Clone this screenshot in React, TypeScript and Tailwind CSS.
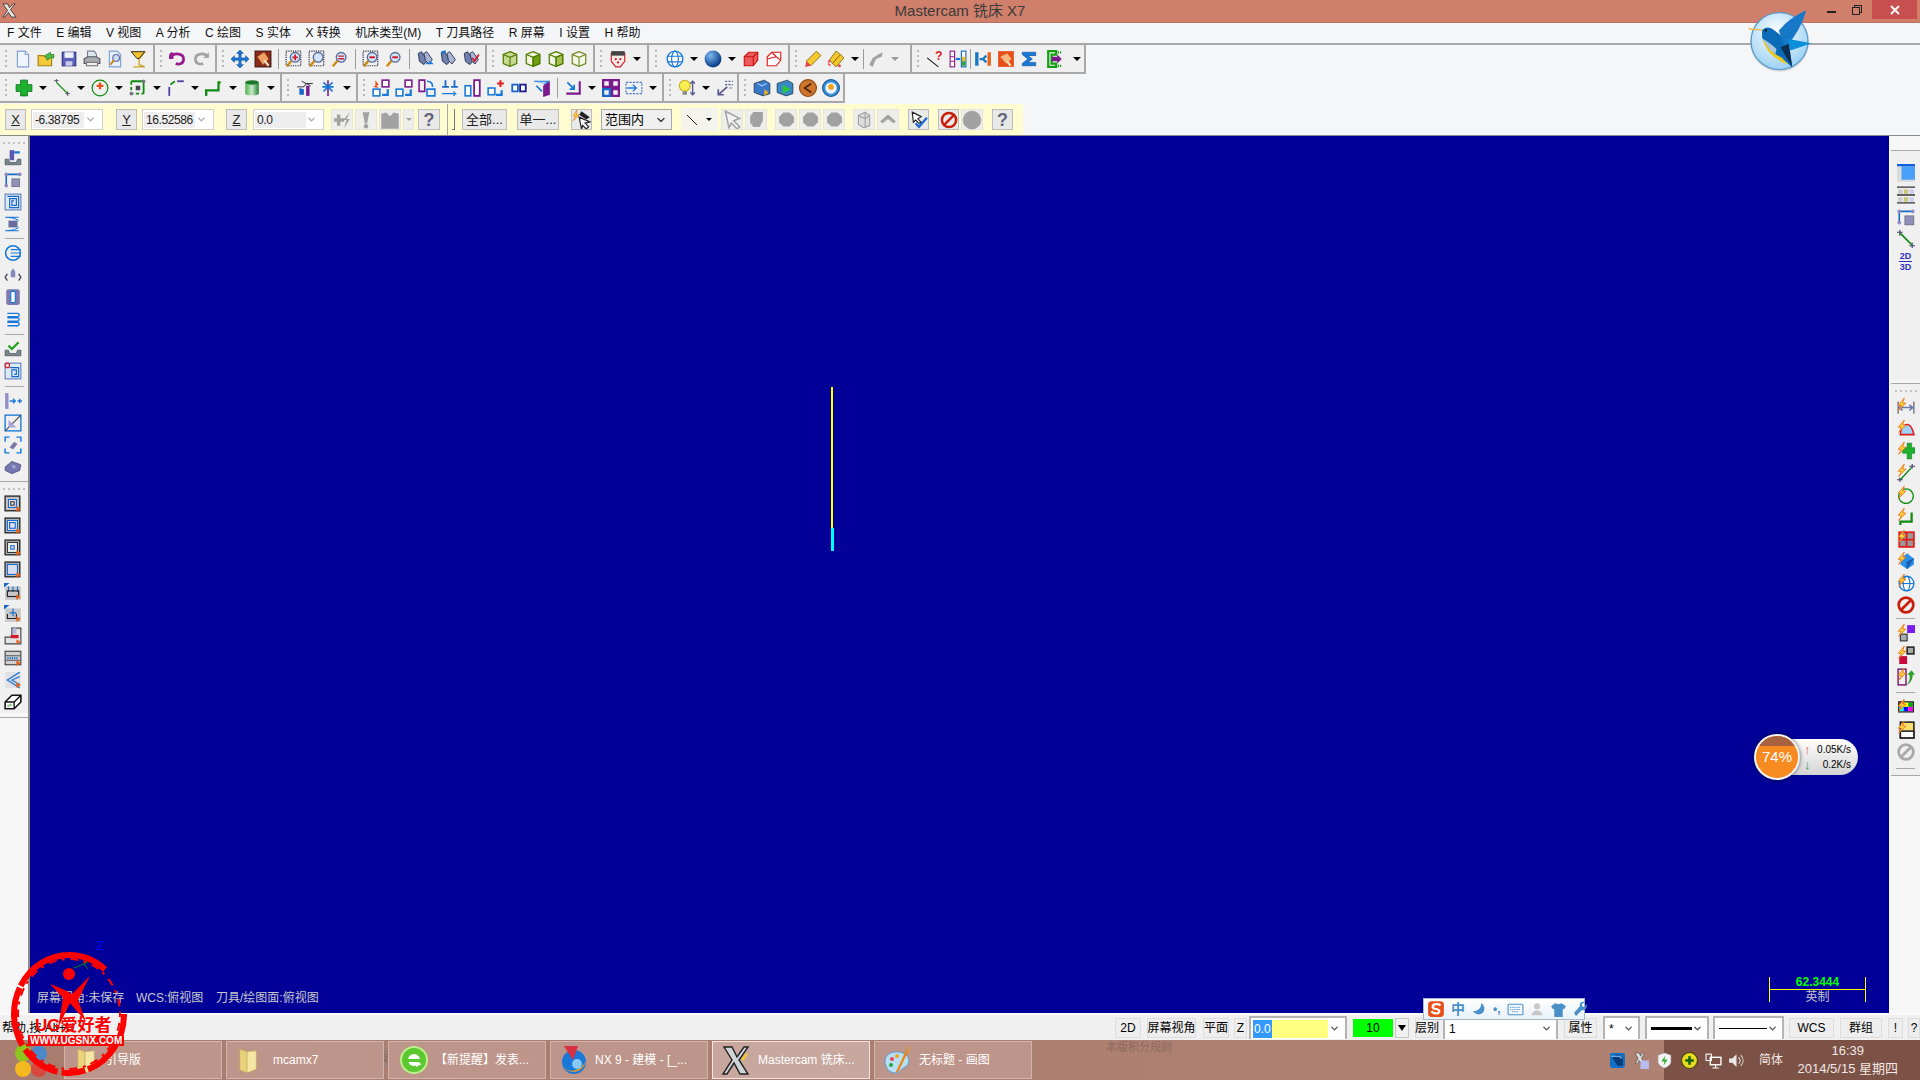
import type { ReactNode } from "react";
import { ChevronDown } from "lucide-react";

const S = ({ children, size = 18 }: { children: ReactNode; size?: number }) => (
  <svg viewBox="0 0 16 16" width={size} height={size} className="block shrink-0">
    {children}
  </svg>
);

// shared little drawings
const Mag = ({ dots, sign, glass = "#cfe6fb" }: { dots?: boolean; sign?: string; glass?: string }) => (
  <S>
    {dots && <rect x="1" y="1" width="13" height="13" fill="none" stroke="#223" strokeWidth="1" strokeDasharray="1 1" />}
    <circle cx="9" cy="6.5" r="4.3" fill={glass} stroke="#5a6a9a" strokeWidth="1.2" />
    <path d="M5.8 9.6L1.6 14.4" stroke="#c98a10" strokeWidth="2.2" />
    {sign === "+" && <path d="M9 4v5M6.5 6.5h5" stroke="#d21c2c" strokeWidth="1.6" />}
    {sign === "-" && <path d="M6.5 6.5h5" stroke="#d21c2c" strokeWidth="1.8" />}
    {sign === "=" && <path d="M6.5 5.4h5M6.5 7.8h5" stroke="#d21c2c" strokeWidth="1.2" />}
  </S>
);

const Cube = ({ stroke, fill, top, side }: { stroke: string; fill: string; top?: string; side?: string }) => (
  <S>
    <path d="M8 1.5L14 4v8l-6 2.5L2 12V4z" fill={fill} stroke={stroke} strokeWidth="1.1" />
    {top && <path d="M8 1.5L14 4 8 6.5 2 4z" fill={top} stroke={stroke} strokeWidth="1" />}
    {side && <path d="M8 6.5L14 4v8l-6 2.5z" fill={side} stroke={stroke} strokeWidth="1" />}
    <path d="M2 4l6 2.5L14 4M8 6.5v8" fill="none" stroke={stroke} strokeWidth="1" />
  </S>
);

const Bino = ({ mark }: { mark: ReactNode }) => (
  <S>
    <path d="M2 3l3-1.5 5 8-3 3.5-4-3z" fill="#6f7fae" stroke="#2b3150" strokeWidth=".8" />
    <path d="M7 3l2.5-1.5 5 7-3 4-3-3z" fill="#a9b5d2" stroke="#2b3150" strokeWidth=".8" />
    {mark}
  </S>
);

const Bolt = () => (
  <path d="M6.5 0L1 6.5h3L1.5 11 8 4.5H5z" fill="#ffd53c" stroke="#e8701a" strokeWidth=".7" />
);

const PrintBox = ({ inner }: { inner: ReactNode }) => (
  <S>
    <rect x="1" y="1" width="13" height="13" fill="#c4c4c4" stroke="#333" strokeWidth="1.3" />
    {inner}
    <path d="M11 10l4 2.5-4 2.5z" fill="#e8641a" />
  </S>
);

const Grip = ({ className = "w-[11px]" }: { className?: string }) => (
  <div className={`flex shrink-0 flex-col items-center justify-center gap-[3px] ${className}`}>
    {[0, 1, 2, 3].map((i) => (
      <div key={i} className="h-[2px] w-[2px] bg-[#b8b8b8]" />
    ))}
  </div>
);

const T = ({ children }: { children: ReactNode }) => (
  <div className="flex h-full w-[23px] shrink-0 items-center justify-center">{children}</div>
);

const Arr = ({ muted }: { muted?: boolean }) => (
  <div className="flex h-full w-[15px] shrink-0 items-center justify-center">
    <div className={`h-0 w-0 border-x-[4px] border-t-[4px] border-x-transparent ${muted ? "border-t-[#9a9a9a]" : "border-t-black"}`} />
  </div>
);

const Thin = ({ className = "w-[8px]" }: { className?: string }) => (
  <div className={`flex h-full shrink-0 items-center justify-center ${className}`}>
    <div className="h-[20px] w-px bg-[#9c9c9c]" />
  </div>
);

const Bar = ({ className, children }: { className: string; children: ReactNode }) => (
  <div className={`flex h-[29px] shrink-0 items-center border-r-2 border-b-2 border-r-[#a8a8a8] border-b-[#a8a8a8] bg-[#f0f0f0] ${className}`}>
    {children}
  </div>
);

const Btn = ({ className, children }: { className: string; children?: ReactNode }) => (
  <div className={`flex h-[21px] shrink-0 items-center justify-center border border-[#bdbdbd] bg-[#e9e9e9] text-[13px] text-[#222] ${className}`}>
    {children}
  </div>
);

const GreyBtn = ({ className, children }: { className: string; children?: ReactNode }) => (
  <div className={`flex h-[21px] shrink-0 items-center justify-center border border-[#e4e4e0] bg-[#eeeeea] ${className}`}>
    {children}
  </div>
);

const Hex = () => (
  <S size={17}>
    <path d="M5 1.5h6L15 5.5v5L11 14.5H5L1 10.5v-5z" fill="#a2a2a2" />
  </S>
);

const Combo = ({ className, value }: { className: string; value: string }) => (
  <div className={`flex h-[21px] shrink-0 items-center border border-[#d0d0d0] bg-white pl-[1px] ${className}`}>
    <span className="w-[51px] bg-[#eeeeee] px-[2px] text-[12px] leading-[16px] tracking-[-0.4px] text-[#222]">{value}</span>
    <ChevronDown size={11} strokeWidth={3} className="ml-auto mr-[6px] text-[#aaa]" />
  </div>
);

const StatusBtn = ({ className, children }: { className: string; children: ReactNode }) => (
  <div className={`flex h-[20px] shrink-0 items-center justify-center whitespace-nowrap border border-[#dcdcdc] bg-[#eeeeee] text-[12px] ${className}`}>
    {children}
  </div>
);

const StatusCombo = ({ className, children }: { className: string; children: ReactNode }) => (
  <div className={`flex h-[23px] shrink-0 items-center border-x-2 border-t-2 border-[#b4b4b4] bg-white px-[4px] text-[12px] ${className}`}>
    {children}
    <ChevronDown size={11} strokeWidth={3} className="ml-auto text-[#555]" />
  </div>
);

const Cell = ({ children }: { children: ReactNode }) => (
  <div className="flex h-[22px] items-center justify-center">{children}</div>
);

const Rule = ({ className = "" }: { className?: string }) => (
  <div className={`mx-auto h-px w-[19px] bg-[#a8a8a8] ${className}`} />
);

const HGrip = () => (
  <div className="flex h-[5px] items-center justify-center gap-[3px]">
    {[0, 1, 2, 3, 4].map((i) => (
      <div key={i} className="h-[2px] w-[2px] bg-[#c0c0c0]" />
    ))}
  </div>
);

const Folder = () => (
  <svg viewBox="0 0 24 30" width="22" height="30" className="shrink-0">
    <path d="M3 3l8 3v23l-8-3z" fill="#e8d27c" stroke="#b9a050" strokeWidth=".6" />
    <path d="M11 6l10-1v20l-10 4z" fill="#f5e6a4" stroke="#c4ad62" strokeWidth=".6" />
  </svg>
);

const TaskBtn = ({ icon, label, active, className = "" }: { icon: ReactNode; label: string; active?: boolean; className?: string }) => (
  <div
    className={`flex h-[38px] w-[158px] shrink-0 items-center border text-[12px] text-white ${
      active ? "border-[#f2e6e2] bg-[#c7a79e]" : "border-[#d2b5ac] bg-[#bd958a]"
    } ${className}`}
  >
    {icon}
    <span className="whitespace-nowrap">{label}</span>
  </div>
);

const Bird = () => (
  <svg viewBox="320 20 200 200" className="absolute left-[1747px] top-[7px] h-[67px] w-[67px]">
    <defs>
      <radialGradient id="orb" cx="45%" cy="35%" r="70%">
        <stop offset="0" stopColor="#ffffff" />
        <stop offset="1" stopColor="#94cdf3" />
      </radialGradient>
    </defs>
    <circle cx="417" cy="125" r="88" fill="#999" opacity=".3" />
    <circle cx="417" cy="122" r="85" fill="url(#orb)" stroke="#5e9cc9" strokeWidth="4" />
    <path d="M325 85L368 89" stroke="#e8b84a" strokeWidth="4" />
    <path d="M365 90Q375 76 395 85L415 100 445 130 455 200 420 170Q375 150 365 110z" fill="#0b6bb8" />
    <path d="M368 115Q385 125 408 145L405 160Q375 150 368 115z" fill="#aac6dc" />
    <path d="M367 115Q375 165 442 192L425 172Q390 160 370 120z" fill="#f0c814" />
    <path d="M430 135L415 90Q450 50 497 30 480 90 440 135z" fill="#1878c8" />
    <path d="M440 115L512 128 450 150z" fill="#0a8fd8" />
    <path d="M420 140L445 130 455 200z" fill="#0b2e55" />
    <circle cx="376" cy="90" r="4" fill="#0a2440" />
  </svg>
);

const Watermark = () => (
  <div className="absolute left-[8px] top-[948px] h-[132px] w-[124px]">
    <svg viewBox="0 0 124 132" className="absolute inset-0 h-full w-full">
      <ellipse cx="61" cy="66" rx="55" ry="59" fill="none" stroke="#f00" strokeWidth="6" strokeDasharray="70 3 24 4 40 5 60 2 100" />
      <ellipse cx="61" cy="66" rx="51" ry="55" fill="none" stroke="#f00" strokeWidth="2" strokeDasharray="3 6 8 5" />
      <circle cx="61" cy="26" r="6" fill="#f00" />
      <path d="M42 36Q58 42 64 46L82 28 70 52 78 74 62 55 50 80 55 50z" fill="#f00" />
      <path d="M66 20l14-6M76 16l4 5" stroke="#080" strokeWidth="1" />
    </svg>
    <div className="absolute left-[27px] top-[68px] whitespace-nowrap text-[17px] font-bold leading-[20px] text-[#f00]">
      UG爱好者
    </div>
    <div className="absolute left-[20px] top-[87px] whitespace-nowrap bg-[#f00] px-[2px] text-[10px] font-bold leading-[11px] text-white">
      WWW.UGSNX.COM
    </div>
  </div>
);

const Meter = () => (
  <div className="absolute left-[1754px] top-[734px] flex h-[46px] w-[106px] items-center">
    <div className="ml-[22px] flex h-[36px] w-[82px] flex-col justify-center rounded-r-full bg-gradient-to-b from-white to-[#d4d4d4] pl-[28px] text-[10px] leading-[15px] text-black">
      <div className="flex items-center">
        <span className="text-[13px] font-bold leading-none text-[#d9604a]">↑</span>
        <span className="ml-auto mr-[7px]">0.05K/s</span>
      </div>
      <div className="flex items-center">
        <span className="text-[13px] font-bold leading-none text-[#2f9a52]">↓</span>
        <span className="ml-auto mr-[7px]">0.2K/s</span>
      </div>
    </div>
    <div className="absolute left-0 top-0 flex h-[46px] w-[46px] items-center justify-center overflow-hidden rounded-full border-2 border-[#f4f4f4] bg-[#f88a22] text-[15px] text-white shadow-[0_0_4px_rgba(0,0,0,.6)]">
      <div className="absolute left-0 right-0 top-0 h-[10px] bg-[#a9623f]" />
      <span className="relative">74%</span>
    </div>
  </div>
);

const Toolbar1 = () => (
  <div className="flex h-[31px] items-start border-t-2 border-t-[#a8a8a8]">
    <Bar className="w-[155px]">
      <Grip />
      <T><S><path d="M3 1h7l3 3v11H3z" fill="#eef5ff" stroke="#7f9fd0" /><path d="M10 1v3h3" fill="#fff" stroke="#7f9fd0" /></S></T>
      <T><S><path d="M1 5h5l1 1h6v8H1z" fill="#f5c93a" stroke="#a07f10" /><path d="M7 5l5-3v2h3v3h-3l-3 2z" fill="#4cb848" stroke="#1f7a1f" strokeWidth=".6" /></S></T>
      <T><S><rect x="2" y="2" width="12" height="12" fill="#5b62b8" stroke="#2c2f80" /><rect x="4" y="2" width="8" height="5" fill="#f0f0ff" /><rect x="5" y="10" width="6" height="4" fill="#c9cbe8" /></S></T>
      <T><S><path d="M4 1h6l2 3v3H4z" fill="#dfe6f0" stroke="#77808f" /><path d="M1 8l3-2h8l3 2v4H1z" fill="#a9acb2" stroke="#55585e" /><rect x="3" y="11" width="10" height="3" fill="#eee" stroke="#777" /></S></T>
      <T><S><path d="M3 1h7l3 3v11H3z" fill="#e6f0ff" stroke="#7f9fd0" /><circle cx="9" cy="7" r="3" fill="#cde" stroke="#5a6a9a" /><path d="M7 9l-3 4" stroke="#c98a10" strokeWidth="1.6" /></S></T>
      <T><S><path d="M2 2h12L9 8v5l5 2H4" fill="none" stroke="#caa020" strokeWidth="1.2" /><path d="M2 1.5h12l-5 6H7z" fill="#f2c22c" stroke="#222" strokeWidth=".8" /></S></T>
    </Bar>
    <Bar className="w-[62px]">
      <Grip />
      <T><S><path d="M4 4C2 2 1 4 1 5v2h3" fill="none" stroke="#9a1a8c" strokeWidth="2" /><path d="M2 6c3-4 11-3 11 2s-5 5-7 4" fill="none" stroke="#9a1a8c" strokeWidth="2.4" /></S></T>
      <T><S><path d="M14 6c-3-4-11-3-11 2s5 5 7 4" fill="none" stroke="#a2a2a2" strokeWidth="2.4" /><path d="M15 2v5h-5z" fill="#a2a2a2" /></S></T>
    </Bar>
    <Bar className="w-[270px]">
      <Grip />
      <T><S><path d="M8 0l3 3H9v4h4V5l3 3-3 3V9H9v4h2l-3 3-3-3h2V9H3v2L0 8l3-3v2h4V3H5z" fill="#1878d8" stroke="#0a4a90" strokeWidth=".5" /></S></T>
      <T><S><rect x="1" y="1" width="14" height="14" fill="#8c2a1a" stroke="#40120a" /><path d="M3 6l6-4 4 6-5 5z" fill="#f0a060" /><path d="M9 9l4 5" stroke="#e8e0c8" strokeWidth="2" /></S></T>
      <Thin />
      <T><Mag dots sign="+" /></T>
      <T><Mag dots /></T>
      <T><Mag sign="=" /></T>
      <Thin />
      <T><Mag dots sign="-" /></T>
      <T><Mag sign="-" /></T>
      <Thin />
      <T><Bino mark={<path d="M9 12l5 0-2-2" stroke="#1878d8" fill="none" strokeWidth="1.5" />} /></T>
      <T><Bino mark={<path d="M2 2l4-1M2 2l2 2" stroke="#1878d8" fill="none" strokeWidth="1.5" />} /></T>
      <T><Bino mark={<path d="M9 7l2 3 4-6" stroke="#d21c2c" fill="none" strokeWidth="1.6" />} /></T>
    </Bar>
    <Bar className="w-[108px]">
      <Grip />
      <T><Cube stroke="#4e7a00" fill="#c8d890" /></T>
      <T><Cube stroke="#4e7a00" fill="#f0f4e0" side="#6ea010" /></T>
      <T><Cube stroke="#4e7a00" fill="#f0f4e0" side="#a4c050" /></T>
      <T><Cube stroke="#6e8a20" fill="#f4f6ea" /></T>
    </Bar>
    <Bar className="w-[54px]">
      <Grip />
      <T><S><path d="M2 3h12v7l-4 5H6l-4-5z" fill="#fde8e8" stroke="#d01c1c" /><rect x="2" y="1" width="12" height="4" fill="#444" /><circle cx="6" cy="8" r="1" fill="#d01c1c" /><circle cx="10" cy="8" r="1" fill="#d01c1c" /><circle cx="8" cy="11" r="1" fill="#d01c1c" /></S></T>
      <Arr />
    </Bar>
    <Bar className="w-[141px]">
      <Grip className="w-[14px]" />
      <T><S><circle cx="8" cy="8" r="7" fill="#fff" stroke="#1878d8" strokeWidth="1.2" /><ellipse cx="8" cy="8" rx="3" ry="7" fill="none" stroke="#1878d8" /><path d="M1 5.5h14M1 10.5h14" stroke="#1878d8" /></S></T>
      <Arr />
      <T><S><defs><radialGradient id="sph" cx="35%" cy="30%" r="70%"><stop offset="0" stopColor="#7ab8f0" /><stop offset="1" stopColor="#0a3a88" /></radialGradient></defs><circle cx="8" cy="8" r="7.5" fill="url(#sph)" /></S></T>
      <Arr />
      <T><S><path d="M2 6l4-4h8v7l-4 5H2z" fill="#ef5a5a" stroke="#c81414" /><path d="M2 6h8v8M10 6l4-4" fill="none" stroke="#c81414" /></S></T>
      <T><S><path d="M2 6l4-4h8v7l-4 5H2z" fill="#fff" stroke="#e01c1c" /><path d="M6 2l4 4 4 3M10 6l-8 2" fill="none" stroke="#e01c1c" /></S></T>
    </Bar>
    <Bar className="w-[122px]">
      <Grip />
      <T><S><path d="M11 1l4 4-9 9-4-4z" fill="#f2c92c" stroke="#8c6a10" strokeWidth=".8" /><path d="M2 10l4 4-5 1z" fill="#e8464c" /></S></T>
      <T><S><path d="M8 1l4 3-7 8-3-3z" fill="#f2c92c" stroke="#8c6a10" strokeWidth=".8" /><path d="M12 4l3 3-7 8-3-3z" fill="#f2c92c" stroke="#8c6a10" strokeWidth=".8" /><path d="M1 12l2 2M3 9l-2 2" stroke="#e8464c" strokeWidth="1.5" /><circle cx="11" cy="14" r="1.4" fill="#e8464c" /></S></T>
      <Arr />
      <Thin className="w-[2px]" />
      <T><S><path d="M14 2l-1 4-5 2-3 7-3-2 3-6 5-3z" fill="#a2a2a2" /></S></T>
      <Arr muted />
    </Bar>
    <Bar className="w-[174px]">
      <Grip />
      <T><S><path d="M1 7l10 8" stroke="#222" strokeWidth="1" /><text x="8" y="9" fontSize="11" fontWeight="700" fill="#e02020" fontFamily="Liberation Sans">?</text></S></T>
      <T><S><rect x="1" y="1" width="4" height="14" fill="#fff" stroke="#8c1a8c" /><path d="M1 6h4M1 10h4" stroke="#8c1a8c" /><rect x="11" y="1" width="4" height="14" fill="#fff" stroke="#1868c8" /><rect x="11.5" y="6" width="3" height="4" fill="#e8c020" /><rect x="11.5" y="10" width="3" height="4" fill="#30a030" /><path d="M6 8h4" stroke="#1878d8" strokeWidth="2" /></S></T>
      <Thin className="w-[2px]" />
      <T><S><rect x="1" y="2" width="3" height="12" fill="#1878c8" /><rect x="12" y="2" width="3" height="12" fill="#e8641a" /><path d="M5 8h3M11 5l-3 3 3 3" stroke="#1878c8" strokeWidth="2" fill="none" /></S></T>
      <T><S><rect x="1" y="1" width="14" height="14" fill="#e8501a" /><path d="M3 6l6-3 4 5-5 4z" fill="#f5b880" /><path d="M9 10l3 4" stroke="#f0e0b0" strokeWidth="2" /></S></T>
      <T><S><path d="M2 2h12v3H7l4 3-4 3h7v3H2v-2l5-4-5-4z" fill="#1878d8" stroke="#0a4a90" strokeWidth=".5" /></S></T>
      <div className="flex h-full w-[29px] shrink-0 items-center justify-center"><S><path d="M2 1h7v3H5v8h4v3H2z" fill="none" stroke="#10a010" strokeWidth="2" /><path d="M11 1v2M13 1v2M11 13v2M13 13v2" stroke="#10a010" /><path d="M5 6h5V4l4 4-4 4v-2H5z" fill="#7a1a8c" /></S></div>
      <Arr />
    </Bar>
  </div>
);

const Toolbar2 = () => (
  <div className="flex h-[30px] items-start">
    <Bar className="w-[282px]">
      <Grip className="w-[12px]" />
      <T><S><path d="M5 1h6v4h4v6h-4v4H5v-4H1V5h4z" fill="#20b030" stroke="#0a7a1a" strokeWidth=".8" /></S></T>
      <Arr />
      <T><S><path d="M3 3l10 10" stroke="#108a10" strokeWidth="1.2" /><path d="M1 1.5h4M3 0v3M11 13h4M13 11v4" stroke="#446" strokeWidth=".8" /></S></T>
      <Arr />
      <T><S><circle cx="8" cy="8" r="7" fill="none" stroke="#108a10" strokeWidth="1.1" /><path d="M8 3v6M5 6h6" stroke="#e8501a" strokeWidth="2" /></S></T>
      <Arr />
      <T><S><path d="M2 2h11v11" fill="none" stroke="#108a10" strokeWidth="1.6" /><path d="M2 2v11h11" fill="none" stroke="#108a10" strokeWidth="1.6" strokeDasharray="3 2" /><rect x="6" y="6" width="4" height="4" fill="#445" /><circle cx="2" cy="13" r="1.6" fill="#778" /><circle cx="13" cy="2" r="1.6" fill="#778" /></S></T>
      <Arr />
      <T><S><path d="M2 15V7" stroke="#5040a0" strokeWidth="1.6" /><path d="M3 5l4-3" stroke="#108a10" strokeWidth="1.6" /><path d="M9 2h6" stroke="#5040a0" strokeWidth="1.6" /></S></T>
      <Arr />
      <T><S><path d="M1 14v-4h11V3h2" fill="none" stroke="#108a10" strokeWidth="2" /><path d="M1 12v3" stroke="#108a10" strokeWidth="2" /></S></T>
      <Arr />
      <T><S><defs><linearGradient id="cyl" x1="0" x2="1"><stop offset="0" stopColor="#50b050" /><stop offset=".5" stopColor="#c8e8c8" /><stop offset="1" stopColor="#208030" /></linearGradient></defs><path d="M2 3v10c0 2 12 2 12 0V3z" fill="url(#cyl)" /><ellipse cx="8" cy="3" rx="6" ry="2" fill="#1a7a2a" /></S></T>
      <Arr />
    </Bar>
    <Bar className="w-[76px]">
      <Grip />
      <T><S><path d="M1 7h6l2-3h6M5 2l8 4" fill="none" stroke="#223" strokeWidth=".8" /><path d="M3 8l4 1v5H3z" fill="#1868c8" /><path d="M9 6h3v9H9z" fill="#7a1a8c" /></S></T>
      <T><S><path d="M8 1v14" stroke="#7a1a8c" strokeWidth="1.4" /><path d="M4 3l8 8M12 3l-8 8M3 7h10" stroke="#1878d8" strokeWidth="1.4" /></S></T>
      <Arr />
    </Bar>
    <Bar className="w-[306px]">
      <Grip />
      <T><S><rect x="9" y="1" width="6" height="6" fill="#fff" stroke="#7a1a8c" strokeWidth="1.4" /><rect x="1" y="9" width="6" height="6" fill="#fff" stroke="#1878d8" strokeWidth="1.4" /><path d="M3 1l3 4-2 1 2 2-5-1 2-1z" fill="#e8501a" /><path d="M9 14h5v-5" stroke="#1878d8" strokeWidth="2" fill="none" /></S></T>
      <T><S><rect x="9" y="1" width="6" height="6" fill="#fff" stroke="#7a1a8c" strokeWidth="1.4" /><rect x="1" y="9" width="6" height="6" fill="#fff" stroke="#1878d8" strokeWidth="1.4" /><path d="M9 14h5v-5" stroke="#1878d8" strokeWidth="2" fill="none" /></S></T>
      <T><S><path d="M1 1h5v10H1z" fill="none" stroke="#7a1a8c" strokeWidth="1.4" /><path d="M8 15h7V9H8z" fill="none" stroke="#1878d8" strokeWidth="1.4" /><path d="M8 2c4 0 5 2 5 5" stroke="#1878d8" fill="none" strokeWidth="1.4" /></S></T>
      <T><S><path d="M4 1v6H1M4 7h3M12 1v6h3M12 7H9" fill="none" stroke="#1868c8" strokeWidth="1.6" /><path d="M1 13h12l-2-2M13 13l-2 2" fill="none" stroke="#1878d8" /></S></T>
      <T><S><rect x="1" y="6" width="5" height="9" fill="#fff" stroke="#1878d8" strokeWidth="1.4" /><rect x="9" y="1" width="5" height="14" fill="#fff" stroke="#7a1a8c" strokeWidth="1.6" /></S></T>
      <T><S><rect x="1" y="8" width="6" height="6" fill="#fff" stroke="#1878d8" strokeWidth="1.4" /><path d="M12 1v6M9 4h6" stroke="#e01c1c" strokeWidth="1.8" /><path d="M8 14h5v-4" stroke="#1878d8" strokeWidth="2" fill="none" /></S></T>
      <T><S><rect x="2" y="5" width="5" height="6" fill="#fff" stroke="#1868c8" strokeWidth="1.6" /><rect x="9" y="5" width="5" height="6" fill="#fff" stroke="#1a1a8c" strokeWidth="1.6" /></S></T>
      <T><S><path d="M1 2h13l-4 3" fill="#a8d0f0" stroke="#1878d8" /><path d="M9 6l6-4v12l-6 2z" fill="#7a1a8c" /><path d="M3 6l5 5" stroke="#1878d8" strokeWidth="1.5" /></S></T>
      <Thin />
      <T><S><path d="M2 13h12V2" fill="none" stroke="#7a1a8c" strokeWidth="1.8" /><path d="M3 3l6 6M9 5v4H5" fill="none" stroke="#1878d8" strokeWidth="1.6" /></S></T>
      <Arr />
      <T><S><rect x="1" y="1" width="6" height="6" fill="none" stroke="#7a1a8c" strokeWidth="2" /><rect x="9" y="1" width="6" height="6" fill="none" stroke="#7a1a8c" strokeWidth="2" /><rect x="1" y="9" width="6" height="6" fill="none" stroke="#1868c8" strokeWidth="2" /><rect x="9" y="9" width="6" height="6" fill="none" stroke="#7a1a8c" strokeWidth="2" /></S></T>
      <T><S><rect x="1" y="3" width="14" height="10" fill="none" stroke="#4878c8" strokeDasharray="2 1" /><path d="M2 8h8M7 5l3 3-3 3" fill="none" stroke="#1878d8" strokeWidth="1.2" /></S></T>
      <Arr />
    </Bar>
    <Bar className="w-[75px]">
      <Grip />
      <T><S><circle cx="6" cy="6" r="4.8" fill="#f8ee50" stroke="#c8b020" /><rect x="4" y="11" width="4" height="3" fill="#888" /><path d="M13 2v12M11 4l2-2 2 2M11 12l2 2 2-2" fill="none" stroke="#5a5a90" strokeWidth="1.3" /></S></T>
      <Arr />
      <T><S><path d="M8 2h7M8 5h7M12 8h3" stroke="#5a5a90" strokeDasharray="2 1" /><path d="M10 7l-8 7M2 9v5h5" fill="none" stroke="#5a5a90" strokeWidth="1.5" /></S></T>
    </Bar>
    <Bar className="w-[106px]">
      <Grip />
      <T><S><path d="M1 4l9-3 5 3v9l-6 2-8-3z" fill="#3a78c8" stroke="#123" strokeWidth=".6" /><path d="M4 4l4 2 4-2" stroke="#9cf" fill="none" /><path d="M10 9l4 3-4 3z" fill="#f2b020" /></S></T>
      <T><S><path d="M1 4l9-3 5 3v9l-6 2-8-3z" fill="#3a88c8" stroke="#123" strokeWidth=".6" /><path d="M6 5l7 4-7 4z" fill="#28c838" /></S></T>
      <T><S><circle cx="8" cy="8" r="7.5" fill="#d0762a" stroke="#8a4a10" /><path d="M11 4L5 8l6 4" fill="none" stroke="#4a2a10" strokeWidth="1.6" /></S></T>
      <T><S><circle cx="8" cy="8" r="7.5" fill="#3a90d8" stroke="#1a5a98" /><circle cx="8" cy="8" r="5" fill="#eef6ff" /><circle cx="8" cy="7" r="2.6" fill="#f2a020" /></S></T>
    </Bar>
  </div>
);

const Toolbar3 = () => (
  <div className="flex h-[31px] w-[1023px] items-center border-b-0 bg-[#fffdd0] pl-[5px]">
    <Btn className="w-[21px]"><span className="underline">X</span></Btn>
    <Combo className="ml-[5px] w-[72px]" value="-6.38795" />
    <Btn className="ml-[13px] w-[21px]"><span className="underline">Y</span></Btn>
    <Combo className="ml-[5px] w-[72px]" value="16.52586" />
    <Btn className="ml-[12px] w-[21px]"><span className="underline">Z</span></Btn>
    <Combo className="ml-[6px] w-[71px]" value="0.0" />
    <GreyBtn className="ml-[7px] w-[22px]"><S size={18}><path d="M5 3v10M1 8h9" stroke="#a2a2a2" strokeWidth="3" /><path d="M15 1l-6 7h3l-2 7 5-8h-3z" fill="#a2a2a2" /></S></GreyBtn>
    <GreyBtn className="ml-[2px] w-[22px]"><S size={18}><path d="M5 1h6l-2 10H7z" fill="#a2a2a2" /><circle cx="8" cy="13.5" r="2" fill="#a2a2a2" /></S></GreyBtn>
    <GreyBtn className="ml-[2px] w-[22px]"><S size={20}><path d="M1 3l4-1 3 3 3-3 4 1v12H1z" fill="#a2a2a2" /></S></GreyBtn>
    <GreyBtn className="ml-[2px] w-[11px]"><div className="h-0 w-0 border-x-[3px] border-t-[3px] border-x-transparent border-t-[#a2a2a2]" /></GreyBtn>
    <Btn className="ml-[4px] w-[22px] text-[18px] font-bold leading-none text-[#66667a]">?</Btn>
    <div className="ml-[7px] h-full w-px bg-[#a8a8a8]" />
    <div className="ml-[4px] h-[21px] w-[3px] border-b border-r border-[#777]" />
    <Btn className="ml-[7px] w-[45px]">全部...</Btn>
    <Btn className="ml-[10px] w-[42px]">单一...</Btn>
    <Btn className="ml-[12px] w-[21px]"><S size={19}><path d="M6 6l9 4-4 1 3 3-2 2-3-3-1 3z" fill="#fff" stroke="#222" /><path d="M8 1l7 5-3 2-6-4z" fill="#222" /><path d="M4 0L1 5h2L1 9l5-5H4z" fill="#ffd53c" stroke="#e8701a" strokeWidth=".5" /></S></Btn>
    <div className="ml-[9px] flex h-[21px] w-[71px] shrink-0 items-center border border-[#a8a8a8] bg-[#f0f0f0] pl-[3px] text-[13px]">
      范围内
      <ChevronDown size={12} strokeWidth={3} className="ml-auto mr-[4px] text-[#444]" />
    </div>
    <div className="ml-[9px] flex h-[23px] w-[37px] shrink-0 items-center bg-[#f4f4ec] pl-[3px]">
      <S size={16}><path d="M3 3l10 10" stroke="#222" strokeWidth="1" /></S>
      <div className="ml-auto mr-[6px] h-0 w-0 border-x-[3px] border-t-[3px] border-x-transparent border-t-black" />
    </div>
    <GreyBtn className="ml-[3px] w-[22px]"><S size={19}><path d="M2 1l12 6-5 2 5 5-2 2-5-5-2 4z" fill="#f4f4f4" stroke="#a2a2a2" strokeWidth="1.3" /></S></GreyBtn>
    <GreyBtn className="ml-[2px] w-[22px]"><S size={17}><path d="M2 5l3-4h9v8l-3 6H5l-3-4z" fill="#a2a2a2" /></S></GreyBtn>
    <GreyBtn className="ml-[8px] w-[22px]"><Hex /></GreyBtn>
    <GreyBtn className="ml-[2px] w-[22px]"><Hex /></GreyBtn>
    <GreyBtn className="ml-[2px] w-[22px]"><Hex /></GreyBtn>
    <GreyBtn className="ml-[8px] w-[22px]"><S size={18}><path d="M3 4l6-3 4 3v9l-5 2-5-3z" fill="#dcdcdc" stroke="#a2a2a2" /><path d="M9 1v14M3 4l6 3 4-3" fill="none" stroke="#a2a2a2" /></S></GreyBtn>
    <GreyBtn className="ml-[2px] w-[22px]"><S size={18}><path d="M8 3l7 6-2 2-5-4-5 4-2-2z" fill="#a2a2a2" /></S></GreyBtn>
    <Btn className="ml-[9px] w-[21px]"><S size={18}><path d="M2 1l8 4-3 2 3 3-2 1-3-3-2 2z" fill="#fff" stroke="#222" /><path d="M5 11l3 3 7-8" fill="none" stroke="#1868d8" strokeWidth="2" /></S></Btn>
    <Btn className="ml-[9px] w-[21px]"><S size={18}><circle cx="8" cy="8" r="6.3" fill="none" stroke="#c81e0a" strokeWidth="2.2" /><path d="M3.5 12.5l9-9" stroke="#c81e0a" strokeWidth="2.2" /></S></Btn>
    <GreyBtn className="ml-[2px] w-[22px]"><S size={20}><circle cx="8" cy="8" r="7.4" fill="#a2a2a2" /></S></GreyBtn>
    <Btn className="ml-[9px] w-[21px] text-[18px] font-bold leading-none text-[#66667a]">?</Btn>
  </div>
);

const LeftStrip = () => (
  <div className="flex w-[30px] shrink-0 flex-col border-r-2 border-r-[#8a8a8a] bg-[#f7f7f7]">
    <div className="bg-[#f0f0f0] pt-[4px]">
      <HGrip />
      <div className="mt-[2px] pr-[2px]">
        <Cell><S><path d="M1 9h3l1 3h6l1-3h3v5H1z" fill="#7a8a8a" stroke="#334" strokeWidth=".5" /><rect x="5" y="1" width="4" height="9" fill="#5a5ab0" /><path d="M9 2h5v2H9z" fill="#1878d8" /></S></Cell>
        <Cell><S><path d="M2 3h12M2 3v10" stroke="#1868c8" strokeWidth="1.4" /><circle cx="2" cy="3" r="1.6" fill="#8a8ac0" /><circle cx="14" cy="3" r="1.6" fill="#8a8ac0" /><circle cx="2" cy="13" r="1.6" fill="#8a8ac0" /><rect x="7" y="7" width="7" height="7" fill="#9090b8" stroke="#556" strokeWidth=".5" /></S></Cell>
        <Cell><S><rect x="1" y="1" width="14" height="14" fill="#dceaf8" stroke="#6080c0" /><path d="M3 3h10v10H5V5h6v6H7V7h2" fill="none" stroke="#1868c8" /></S></Cell>
        <Cell><S><path d="M1 2h12M1 14h12M1 2c4 0 8 0 12 3M1 14c4 0 8 0 12-3" fill="none" stroke="#1878d8" /><rect x="4" y="5" width="8" height="6" fill="#6a6aa0" /></S></Cell>
      </div>
      <Rule className="mt-[3px]" />
      <div className="mt-[3px] pr-[2px]">
        <Cell><S><circle cx="8" cy="8" r="6.5" fill="none" stroke="#1878d8" strokeWidth="1.4" /><path d="M6 5h9M6 8h9M6 11h9" stroke="#1878d8" /></S></Cell>
        <Cell><S><path d="M6 10V5l2-3 2 3v5z" fill="#8888c0" /><path d="M3 7L1 10l2 3M13 7l2 3-2 3" fill="none" stroke="#445" strokeWidth="1.2" /></S></Cell>
        <Cell><S><rect x="2" y="1" width="12" height="14" rx="2" fill="#7a7ab0" /><rect x="6" y="3" width="4" height="10" rx="1" fill="#fff" stroke="#1878d8" /></S></Cell>
        <Cell><S><path d="M3 3h9c2 0 2 3 0 3H3M3 7h9c2 0 2 3 0 3H3M3 11h9c2 0 2 3 0 3H3" fill="none" stroke="#1878d8" strokeWidth="1.2" /></S></Cell>
      </div>
      <Rule className="mt-[4px]" />
      <div className="mt-[3px] pr-[2px]">
        <Cell><S><path d="M1 9h3l1 3h6l1-3h3v5H1z" fill="#7a8a8a" stroke="#334" strokeWidth=".5" /><path d="M4 5l3 3 6-6" fill="none" stroke="#20a020" strokeWidth="2" /></S></Cell>
        <Cell><S><rect x="1" y="1" width="14" height="14" fill="#dceaf8" stroke="#6080c0" /><path d="M5 5h8v8H7V7h4v4H9" fill="none" stroke="#1868c8" /><circle cx="3" cy="3" r="2" fill="none" stroke="#e01c1c" /></S></Cell>
      </div>
      <Rule className="mt-[4px]" />
      <div className="mt-[3px] pr-[2px]">
        <Cell><S><rect x="1" y="1" width="3" height="14" fill="#9090c8" /><path d="M5 8h5M8 6l2 2-2 2M12 8h4M14 6v4" fill="none" stroke="#1878d8" strokeWidth="1.2" /></S></Cell>
        <Cell><S><rect x="1" y="1" width="14" height="14" fill="none" stroke="#1878d8" strokeWidth="1.2" /><path d="M1 15L15 1" stroke="#445" /><path d="M4 5l7 7H4z" fill="#a8a8d8" /></S></Cell>
        <Cell><S><path d="M1 5V1h4M11 1h4v4M15 11v4h-4M5 15H1v-4" fill="none" stroke="#1878d8" strokeWidth="1.3" /><path d="M5 10l4-5 3 2-4 5z" fill="#7a7aa8" /></S></Cell>
        <Cell><S><path d="M1 8l6-5 8 3-1 5-7 3-6-3z" fill="#7676b0" stroke="#404070" strokeWidth=".6" /><path d="M6 6l5 1-2 3z" fill="#a6a6d8" /></S></Cell>
      </div>
      <div className="mt-[3px] h-px bg-[#a8a8a8]" />
      <div className="pt-[4px]"><HGrip /></div>
      <div className="mt-[2px] pr-[2px]">
        <Cell><PrintBox inner={<><rect x="4" y="4" width="7" height="7" fill="#eee" stroke="#1868c8" /><rect x="6" y="6" width="3" height="3" fill="none" stroke="#333" /></>} /></Cell>
        <Cell><PrintBox inner={<><rect x="3" y="3" width="9" height="9" fill="#e0e4f4" stroke="#1868c8" /><rect x="5" y="5" width="5" height="5" fill="none" stroke="#1868c8" /></>} /></Cell>
        <Cell><PrintBox inner={<><rect x="3" y="3" width="9" height="9" fill="#eee" stroke="#333" /><rect x="6" y="6" width="3" height="3" fill="none" stroke="#1868c8" /></>} /></Cell>
        <Cell><PrintBox inner={<rect x="3" y="3" width="9" height="9" fill="#d8dcf0" stroke="#1868c8" />} /></Cell>
        <Cell><S><rect x="1" y="3" width="14" height="12" fill="#c8c8c8" /><path d="M0 0h5L0 4z" fill="#1868c8" /><path d="M4 3v5M8 3v5M12 3v5" stroke="#1868c8" /><rect x="3" y="7" width="10" height="5" fill="none" stroke="#222" /><path d="M11 10l4 2.5-4 2.5z" fill="#e8641a" /></S></Cell>
        <Cell><S><rect x="1" y="3" width="14" height="12" fill="#c8c8c8" /><path d="M0 0h5L0 4z" fill="#1868c8" /><path d="M8 3v7M5 7h6" stroke="#1868c8" /><path d="M3 8v4h8V8" fill="none" stroke="#222" /><path d="M11 10l4 2.5-4 2.5z" fill="#e8641a" /></S></Cell>
        <Cell><S><path d="M1 15V9h6V1h8v14z" fill="#e4e4e4" stroke="#444" /><rect x="6" y="7" width="7" height="3" fill="#d01c2c" /><path d="M8 1h3v5H8z" fill="#b8b8e0" /><path d="M11 11l4 2-4 2z" fill="#e8641a" /></S></Cell>
        <Cell><S><rect x="1" y="2" width="14" height="12" fill="#d0d0d0" stroke="#444" /><path d="M1 6h14M1 10h14" stroke="#555" /><path d="M3 8h10" stroke="#1868c8" strokeDasharray="1 1" strokeWidth="2" /><path d="M11 10l4 2.5-4 2.5z" fill="#e8641a" /></S></Cell>
        <Cell><S><path d="M14 1L3 8l11 7M14 5L7 8l7 4" fill="none" stroke="#1878d8" strokeWidth="1.1" /><rect x="1" y="1" width="14" height="14" fill="#8888aa" opacity=".15" /><path d="M11 10l4 2.5-4 2.5z" fill="#e8641a" /></S></Cell>
        <Cell><S><path d="M1 8l6-6h8v6l-6 6H1z" fill="#fff" stroke="#111" strokeWidth="1.4" /><path d="M1 8h8v6M9 8l6-6" fill="none" stroke="#111" strokeWidth="1.2" /><path d="M3 12l4-2" stroke="#8cc88c" strokeWidth="2" /></S></Cell>
      </div>
    </div>
    <div className="mt-[4px] h-px bg-[#a8a8a8]" />
  </div>
);

const RBolt = ({ children }: { children: ReactNode }) => (
  <S>
    {children}
    <Bolt />
  </S>
);

const RightStrip = () => (
  <div className="flex w-[31px] shrink-0 flex-col bg-[#f7f7f7] pl-[2px]">
    <div className="h-[15px] border-b border-b-[#a8a8a8]" />
    <div className="h-[229px] bg-[#f0f0f0] pt-[11px]">
      <Cell><S><rect x="0" y="0" width="16" height="16" fill="#dcdcdc" /><rect x="4" y="2" width="12" height="12" fill="#4aa0f8" /><rect x="0" y="0" width="16" height="2" fill="#1060e0" /></S></Cell>
      <Cell><S><path d="M0 1h16M0 8h16M0 15h16" stroke="#333" strokeWidth="1.2" /><rect x="1" y="3" width="4" height="4" fill="#ccc" /><rect x="6" y="3" width="4" height="4" fill="#c8c878" /><rect x="11" y="3" width="4" height="4" fill="#cce" /><rect x="1" y="10" width="4" height="4" fill="#ccc" /><rect x="6" y="10" width="4" height="4" fill="#c8c878" /><rect x="11" y="10" width="4" height="4" fill="#cce" /></S></Cell>
      <Cell><S><path d="M2 3h12M2 3v10" stroke="#1868c8" strokeWidth="1.4" /><circle cx="2" cy="3" r="1.6" fill="#8a8ac0" /><circle cx="14" cy="3" r="1.6" fill="#8a8ac0" /><circle cx="2" cy="13" r="1.6" fill="#8a8ac0" /><rect x="7" y="7" width="8" height="8" fill="#9090b8" stroke="#556" strokeWidth=".5" /></S></Cell>
      <Cell><S><path d="M3 3l10 10" stroke="#108a10" strokeWidth="1.4" /><path d="M0 2h5M2.5 0v5M11 14h5M13.5 11v5" stroke="#446" strokeWidth="1" /></S></Cell>
      <Cell><div className="flex flex-col items-center text-[9px] font-bold leading-[10px] text-[#3030c0]"><span className="border-b border-b-[#3030c0] px-px">2D</span><span>3D</span></div></Cell>
    </div>
    <div className="mt-[3px] h-px bg-[#a8a8a8]" />
    <div className="bg-[#f0f0f0] pt-[4px]">
      <HGrip />
      <div className="mt-[3px]">
        <Cell><RBolt><path d="M1 3v11M15 3v11" stroke="#555" /><path d="M3 8.5h10M5 6L2 8.5 5 11M11 6l3 2.5-3 2.5" fill="none" stroke="#6878a8" strokeWidth="1.4" /></RBolt></Cell>
        <Cell><RBolt><path d="M3 13c0-6 3-9 6-9s5 4 6 9z" fill="#a0d0f8" stroke="#e01c1c" strokeWidth="1.5" /></RBolt></Cell>
        <Cell><RBolt><path d="M5 5h4V1h4v4h3v5h-3v5H9v-5H5z" fill="#20b030" stroke="#0a7a1a" strokeWidth=".5" /></RBolt></Cell>
        <Cell><RBolt><path d="M3 14L13 3" stroke="#108a10" strokeWidth="1.3" /><path d="M11 2h5M13.5 0v4M0 14h5M2.5 12v4" stroke="#446" /></RBolt></Cell>
        <Cell><RBolt><circle cx="8" cy="9" r="6.5" fill="none" stroke="#108a10" strokeWidth="1.2" /></RBolt></Cell>
        <Cell><RBolt><path d="M3 15v-3h10V4" fill="none" stroke="#108a10" strokeWidth="2" /></RBolt></Cell>
        <Cell><RBolt><rect x="2" y="2" width="13" height="13" fill="#999" stroke="#e01c1c" strokeWidth="1.6" /><path d="M2 8.5h13M8.5 2v13" stroke="#e01c1c" strokeWidth="1.6" /></RBolt></Cell>
        <Cell><RBolt><path d="M9 1l6 5v5l-6 4-6-4V6z" fill="#2890e8" /><path d="M9 15V9l6-3" fill="#1a60b0" stroke="#1a60b0" /></RBolt></Cell>
        <Cell><RBolt><circle cx="8.5" cy="8.5" r="6.5" fill="#fff" stroke="#1878d8" strokeWidth="1.2" /><ellipse cx="8.5" cy="8.5" rx="3" ry="6.5" fill="none" stroke="#1878d8" /><path d="M2 8.5h13" stroke="#1878d8" /></RBolt></Cell>
        <Cell><S><circle cx="8" cy="8" r="6.5" fill="none" stroke="#c81e0a" strokeWidth="2.4" /><path d="M3.5 12.5l9-9" stroke="#c81e0a" strokeWidth="2.4" /></S></Cell>
      </div>
      <Rule className="mt-[2px]" />
      <div className="mt-[3px]">
        <Cell><RBolt><rect x="9" y="1" width="7" height="7" fill="#7a1af0" /><rect x="3" y="9" width="6" height="6" fill="#aaa" stroke="#333" /></RBolt></Cell>
        <Cell><RBolt><rect x="9" y="1" width="6" height="6" fill="#aaa" stroke="#222" strokeWidth="1.4" /><rect x="2" y="9" width="7" height="7" fill="#c80a3c" /></RBolt></Cell>
        <Cell><RBolt><rect x="1" y="1" width="7" height="14" fill="none" stroke="#7a1a6c" strokeWidth="1.3" /><path d="M8 15c3-2 4-6 3-9H9l4-4 3 4h-2c0 4-2 8-6 9z" fill="#30a030" /></RBolt></Cell>
      </div>
      <Rule className="mt-[4px]" />
      <div className="mt-[4px]">
        <Cell><RBolt><rect x="2" y="3" width="4" height="4" fill="#f00" /><rect x="6" y="3" width="4" height="4" fill="#ff0" /><rect x="10" y="3" width="4" height="4" fill="#0a0" /><rect x="2" y="7" width="4" height="4" fill="#0ff" /><rect x="6" y="7" width="4" height="4" fill="#00f" /><rect x="10" y="7" width="4" height="4" fill="#f0f" /><rect x="1.5" y="2.5" width="13" height="9" fill="none" stroke="#111" /></RBolt></Cell>
        <Cell><RBolt><rect x="3" y="1" width="12" height="14" fill="#f8e070" stroke="#222" strokeWidth="1.4" /><rect x="3" y="9" width="12" height="6" fill="#fff" stroke="#222" strokeWidth="1.4" /></RBolt></Cell>
        <Cell><S><circle cx="8" cy="8" r="6.5" fill="none" stroke="#a8a8a8" strokeWidth="2.4" /><path d="M3.5 12.5l9-9" stroke="#a8a8a8" strokeWidth="2.4" /></S></Cell>
      </div>
      <Rule className="mt-[5px]" />
      <div className="h-[6px]" />
    </div>
    <div className="h-px bg-[#a8a8a8]" />
  </div>
);

const StatusBar = () => (
  <div className="relative flex h-[27px] shrink-0 items-center border-t-2 border-t-[#fbfbfb] bg-[#f0f0f0] pl-[2px]">
    <span className="text-[12px] text-black">帮助,按 Alt+H</span>
    <div className="ml-auto flex h-full w-[805px] items-center self-end">
      <StatusBtn className="w-[26px]">2D</StatusBtn>
      <StatusBtn className="ml-[6px] w-[49px]">屏幕视角</StatusBtn>
      <StatusBtn className="ml-[7px] w-[26px]">平面</StatusBtn>
      <StatusBtn className="ml-[5px] w-[13px]">Z</StatusBtn>
      <div className="ml-[2px] flex h-[23px] w-[98px] shrink-0 items-center border-x-2 border-t-2 border-[#b4b4b4] bg-white pl-[2px] text-[12px]">
        <div className="flex h-[18px] w-[75px] items-center bg-[#ffff80]">
          <span className="bg-[#3399ff] px-px text-white">0.0</span>
        </div>
        <ChevronDown size={11} strokeWidth={3} className="ml-auto mr-[5px] text-[#555]" />
      </div>
      <div className="ml-[6px] flex h-[18px] w-[40px] shrink-0 items-center justify-center bg-[#00ff00] text-[12px]">10</div>
      <div className="ml-[2px] flex h-[20px] w-[14px] shrink-0 items-center justify-center border border-[#c8c8c8]">
        <div className="h-0 w-0 border-x-[4px] border-t-[6px] border-x-transparent border-t-black" />
      </div>
      <StatusBtn className="ml-[6px] w-[24px]">层别</StatusBtn>
      <StatusCombo className="ml-[4px] w-[115px]">1</StatusCombo>
      <StatusBtn className="ml-[6px] w-[33px]">属性</StatusBtn>
      <StatusCombo className="ml-[6px] w-[37px]">*</StatusCombo>
      <StatusCombo className="ml-[5px] w-[64px]"><div className="h-[3px] w-[42px] bg-black" /></StatusCombo>
      <StatusCombo className="ml-[4px] w-[71px]"><div className="h-px w-[48px] bg-black" /></StatusCombo>
      <StatusBtn className="ml-[5px] w-[45px]">WCS</StatusBtn>
      <StatusBtn className="ml-[6px] w-[42px]">群组</StatusBtn>
      <StatusBtn className="ml-[6px] w-[15px]">!</StatusBtn>
      <StatusBtn className="ml-[5px] w-[12px]">?</StatusBtn>
    </div>
  </div>
);

const Taskbar = () => (
  <div className="relative flex h-[40px] shrink-0 items-center bg-gradient-to-r from-[#a87c6e] to-[#b08274]">
    <div className="absolute left-[370px] top-[8px] flex h-[20px] w-[170px] items-center bg-[#a08074] px-[8px] text-[12px] text-[#8a6a60]">
      <span className="mr-[14px]">发表</span>将此主题同步到:
    </div>
    <div className="absolute left-[1106px] top-[0px] text-[11px] leading-[14px] text-[#8c6a60]">本版积分规则</div>
    <div className="relative flex w-[64px] shrink-0 justify-center pl-[2px]">
      <svg viewBox="0 0 40 34" width="40" height="34">
        <ellipse cx="10" cy="10" rx="8" ry="9" fill="#8ec51e" />
        <ellipse cx="26" cy="11" rx="8" ry="9" fill="#4a88c8" />
        <ellipse cx="10" cy="26" rx="8" ry="8" fill="#f4b820" />
        <ellipse cx="26" cy="26" rx="8" ry="8" fill="#d8483c" />
      </svg>
    </div>
    <div className="relative flex gap-[4px]">
      <TaskBtn className="pl-[10px]" icon={<div className="mr-[8px]"><Folder /></div>} label="引导版" />
      <TaskBtn className="pl-[10px]" icon={<div className="mr-[14px]"><Folder /></div>} label="mcamx7" />
      <TaskBtn
        className="pl-[10px]"
        icon={
          <svg viewBox="0 0 30 30" width="30" height="30" className="mr-[6px] shrink-0">
            <circle cx="15" cy="15" r="13" fill="#5cc830" stroke="#bdf08a" strokeWidth="2" />
            <circle cx="15" cy="15" r="6" fill="#fff" />
            <path d="M9 14h12v3H9z" fill="#5cc830" />
            <path d="M17 17l6 2-6 3z" fill="#fff" />
          </svg>
        }
        label="【新提醒】发表..."
      />
      <TaskBtn
        className="pl-[8px]"
        icon={
          <svg viewBox="0 0 30 30" width="30" height="30" className="mr-[6px] shrink-0">
            <circle cx="15" cy="17" r="12" fill="#1a78d8" />
            <path d="M5 1h14l-5 14z" fill="#d83040" />
            <path d="M3 22c8 6 18 5 24-6-3 12-15 14-24 6z" fill="#f2a020" />
            <circle cx="18" cy="19" r="5" fill="#8ac8f8" />
          </svg>
        }
        label="NX 9 - 建模 - [_..."
      />
      <TaskBtn
        active
        className="pl-[8px]"
        icon={
          <svg viewBox="0 0 30 30" width="30" height="32" className="mr-[7px] shrink-0">
            <path d="M3 2h8l5 10 7-10h4l-9 13 9 14h-8L13 18 6 29H2l9-14z" fill="#cfd4d8" stroke="#222" strokeWidth="1.4" />
            <path d="M20 14l5-6 2 1-5 7z" fill="#f2c92c" />
          </svg>
        }
        label="Mastercam 铣床..."
      />
      <TaskBtn
        className="pl-[8px]"
        icon={
          <svg viewBox="0 0 30 30" width="30" height="30" className="mr-[6px] shrink-0">
            <path d="M2 16C2 8 12 5 20 8s7 12 2 14-4 6-10 6S2 22 2 16z" fill="#b8e0f4" stroke="#5a9cc8" />
            <circle cx="9" cy="14" r="2" fill="#e84a4a" />
            <circle cx="14" cy="11" r="2" fill="#f2a020" />
            <circle cx="8" cy="20" r="2" fill="#30a040" />
            <path d="M26 2L14 27" stroke="#e8861a" strokeWidth="2.4" />
            <path d="M23 2l4-1 1 5-4 1z" fill="#c89a60" />
          </svg>
        }
        label="无标题 - 画图"
      />
    </div>
    <div className="relative ml-auto flex items-center gap-[7px] pr-[14px]">
      <S size={17}><rect x="1" y="1" width="14" height="14" rx="2" fill="#1070c8" /><path d="M3 5l5-3 5 3v8H8z" fill="#0a3a7a" /><path d="M2 4h8l2 2" stroke="#8ad0f8" fill="none" /></S>
      <S size={17}><path d="M2 1l4 0 1 3 2-3h2L8 6l3 5H8L6 8l-2 3H2l3-5z" fill="#e4e4e4" stroke="#333" strokeWidth=".5" /><rect x="7" y="8" width="8" height="8" fill="#b8bcf0" /></S>
    </div>
    <div className="relative flex h-full w-[256px] shrink-0 items-center bg-[#7c5146] text-white">
      <div className="-ml-[8px]"><S size={17}><path d="M8 1l6 2v6c0 3-3 5-6 6-3-1-6-3-6-6V3z" fill="#f4f4f4" stroke="#aab" strokeWidth=".5" /><path d="M9 3L5 9h3l-1 4 4-6H8z" fill="#30b030" /></S></div>
      <div className="ml-[8px]"><S size={17}><circle cx="8" cy="8" r="7.5" fill="#e8d820" stroke="#404010" /><path d="M8 4v8M4 8h8" stroke="#106010" strokeWidth="2.4" /></S></div>
      <div className="ml-[7px]"><S size={17}><rect x="1" y="2" width="5" height="6" fill="none" stroke="#fff" /><rect x="5" y="5" width="10" height="7" fill="none" stroke="#fff" strokeWidth="1.3" /><path d="M10 12v3M7 15h6" stroke="#fff" /></S></div>
      <div className="ml-[6px]"><S size={17}><path d="M1 6h3l4-4v12l-4-4H1z" fill="#e8e8e8" /><path d="M10 5c2 2 2 4 0 6M12 3c3 3 3 7 0 10" fill="none" stroke="#ddd" /></S></div>
      <span className="ml-[14px] text-[12px] text-[#f2e8e4]">简体</span>
      <div className="ml-auto mr-[22px] flex flex-col items-center text-[13px] leading-[18px] text-[#f2e8e4]">
        <span>16:39</span>
        <span>2014/5/15 星期四</span>
      </div>
    </div>
  </div>
);

const App = () => (
  <div className="relative flex h-[1080px] w-[1920px] flex-col overflow-hidden bg-[#f5f6f8] font-['Liberation_Sans','Noto_Sans_CJK_SC',sans-serif] text-black">
    {/* title bar */}
    <div className="relative flex h-[23px] shrink-0 items-center justify-center border-b border-b-[#b87060] bg-[#d07f6a]">
      <svg viewBox="0 0 16 16" width="15" height="15" className="absolute left-[2px] top-[3px]">
        <path d="M1 1h5l2 4 4-4h2L9 7l6 8h-5L7 10l-4 5H1l5-7z" fill="#e8e8e8" stroke="#222" strokeWidth=".8" />
      </svg>
      <span className="text-[15px] text-[#3a3a3a]">Mastercam 铣床 X7</span>
      <div className="absolute left-[1827px] top-[11px] h-[2px] w-[9px] bg-[#222]" />
      <div className="absolute left-[1854px] top-[5px] h-[8px] w-[8px] border border-[#222]" />
      <div className="absolute left-[1852px] top-[7px] h-[8px] w-[8px] border border-[#222] bg-[#d07f6a]" />
      <div className="absolute left-[1872px] top-0 flex h-[19px] w-[45px] items-center justify-center bg-[#c74f4f]">
        <svg viewBox="0 0 10 10" width="10" height="10"><path d="M1 1l8 8M9 1l-8 8" stroke="#fff" strokeWidth="1.8" /></svg>
      </div>
    </div>
    {/* menu */}
    <div className="flex h-[20px] shrink-0 items-center gap-[14.5px] pl-[7px] text-[12px] text-[#111]">
      {["F 文件", "E 编辑", "V 视图", "A 分析", "C 绘图", "S 实体", "X 转换", "机床类型(M)", "T 刀具路径", "R 屏幕", "I 设置", "H 帮助"].map((m) => (
        <span key={m} className="whitespace-nowrap">{m}</span>
      ))}
    </div>
    <Toolbar1 />
    <Toolbar2 />
    <Toolbar3 />
    <div className="h-[1px] shrink-0 bg-[#8a8a8a]" />
    {/* work area */}
    <div className="flex min-h-0 flex-1">
      <LeftStrip />
      <div className="relative flex-1 bg-[#000099]">
        <div className="absolute left-[801px] top-[251px] h-[141px] w-[2px] bg-[#ffff00]" />
        <div className="absolute left-[801px] top-[392px] h-[23px] w-[3px] bg-[#00ffff]" />
        <div className="absolute left-[66px] top-[803px] text-[13px] leading-none text-[#0000ff]">Z</div>
        <div className="absolute bottom-[7px] left-[7px] flex text-[12px] leading-[16px] text-[#c8c8c8]">
          <span className="w-[99px]">屏幕视角:未保存</span>
          <span className="w-[80px]">WCS:俯视图</span>
          <span>刀具/绘图面:俯视图</span>
        </div>
        {/* scale bar */}
        <div className="absolute left-[1739px] top-[841px] h-[25px] w-[97px] border-x border-x-[#ffff00]">
          <div className="absolute left-0 right-0 top-[12px] h-px bg-[#ffff00]" />
          <div className="absolute left-0 right-0 -top-[1px] text-center text-[12px] font-bold leading-[13px] text-[#00ff00]">62.3444</div>
          <div className="absolute left-0 right-0 top-[13px] text-center text-[12px] leading-[15px] text-[#c8c8c8]">英制</div>
        </div>
      </div>
      <RightStrip />
    </div>
    <StatusBar />
    <Taskbar />
    {/* sogou input bar */}
    <div className="absolute left-[1423px] top-[998px] flex h-[22px] w-[162px] items-center gap-[6px] border border-[#a8b8c8] bg-gradient-to-b from-white to-[#e8f2fa] px-[3px]">
      <S size={18}><rect x="1" y="1" width="14" height="14" rx="3" fill="#e8501a" /><path d="M12 5c-1-2-7-2-7 1s6 1 6 4-6 2-7 0" fill="none" stroke="#fff" strokeWidth="2" /></S>
      <span className="text-[14px] font-bold leading-none text-[#4a90c8]">中</span>
      <S size={16}><path d="M10 2a6 6 0 1 1-8 8 7 7 0 0 0 8-8z" fill="#4a90c8" /></S>
      <span className="w-[10px] text-[12px] font-bold leading-none text-[#4a90c8]">•,</span>
      <S size={17}><rect x="1" y="3" width="14" height="10" rx="1" fill="none" stroke="#4a90c8" /><path d="M3 6h10M3 8h10M5 10h6" stroke="#4a90c8" strokeDasharray="1 1" /></S>
      <S size={14}><circle cx="8" cy="5" r="3.5" fill="#c8c8c8" /><path d="M2 15c0-7 12-7 12 0z" fill="#c8c8c8" /></S>
      <S size={17}><path d="M5 2l3 1 3-1 4 3-2 3-1-1v8H4V7L3 8 1 5z" fill="#4a90c8" /></S>
      <S size={16}><path d="M14 3l-3 3-2-1 0-2 3-2c-3-1-6 1-5 4L1 12l2 3 6-6c3 1 5-2 5-6z" fill="#4a90c8" /></S>
    </div>
    <Bird />
    <Meter />
    <Watermark />
  </div>
);

export default App;
